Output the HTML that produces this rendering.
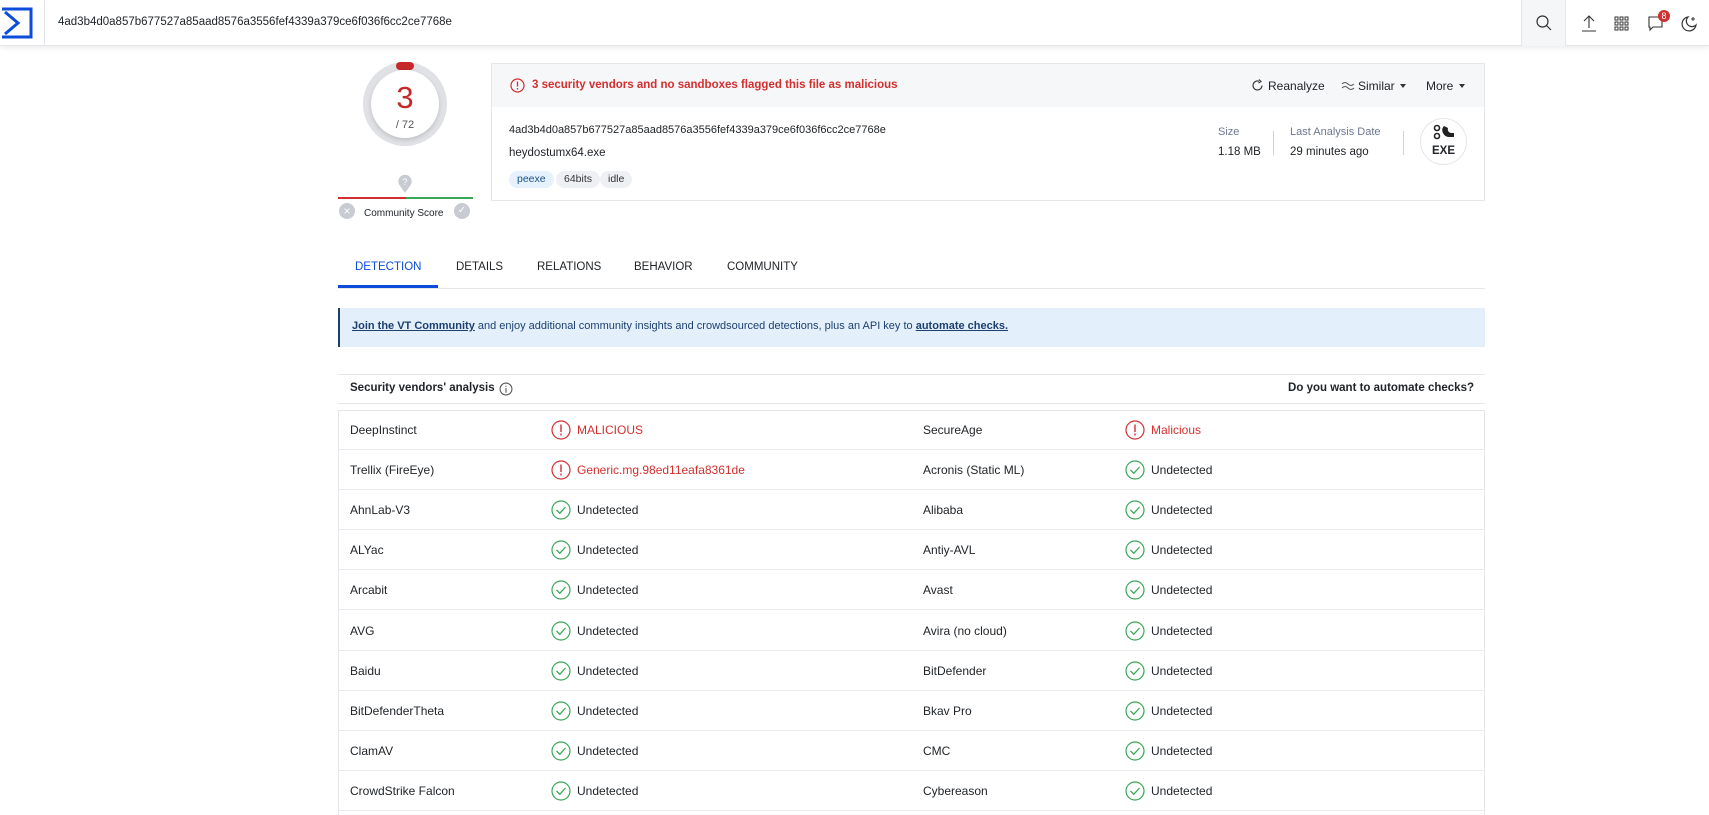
<!DOCTYPE html>
<html><head><meta charset="utf-8"><style>
*{margin:0;padding:0;box-sizing:border-box}
body{width:1709px;height:815px;overflow:hidden;background:#fff;font-family:"Liberation Sans",sans-serif;color:#212529;font-size:12px;position:relative}
.a{position:absolute;white-space:nowrap}
.hdr{position:absolute;left:0;top:0;width:1709px;height:46px;border-bottom:1px solid #e4e6ea;box-shadow:0 2px 5px rgba(0,0,0,.08);background:#fff}
.tag{position:absolute;top:171px;height:17px;line-height:17px;border-radius:9px;background:#eef0f4;font-size:10.5px;padding:0 8px;color:#333}
.row{position:absolute;left:338px;width:1147px;height:40px;border-bottom:1px solid #e8eaee}
.row span{position:absolute;top:13px;font-size:12px}
.row svg{position:absolute;top:10px}
.lbl{color:#6b7791}
.car{position:absolute;width:0;height:0;border-left:3.5px solid transparent;border-right:3.5px solid transparent;border-top:4px solid #333}
</style></head><body>
<div class="hdr">
 <svg class="a" style="left:0;top:7px" width="33" height="32" viewBox="0 0 33 32"><path d="M2 2H31V30H2" fill="none" stroke="#0b4dda" stroke-width="3"/><path d="M5 5L18 16L5 27" fill="none" stroke="#0b4dda" stroke-width="3"/></svg>
 <div class="a" style="left:44px;top:0;width:1px;height:46px;background:#e4e6ea"></div>
 <div class="a" style="left:58px;top:16px;font-size:11.5px">4ad3b4d0a857b677527a85aad8576a3556fef4339a379ce6f036f6cc2ce7768e</div>
 <div class="a" style="left:1521px;top:0;width:45px;height:46px;background:#f5f6f8;border-left:1px solid #e4e6ea;border-right:1px solid #e4e6ea"></div>
 <svg class="a" style="left:1535px;top:14px" width="18" height="18" viewBox="0 0 18 18"><circle cx="7.5" cy="7.5" r="5.5" fill="none" stroke="#333" stroke-width="1.2"/><path d="M11.5 11.5L16 16" stroke="#333" stroke-width="1.2"/></svg>
 <svg class="a" style="left:1581px;top:14px" width="16" height="18" viewBox="0 0 16 18"><path d="M8 14V2M3 7L8 2L13 7M1 17H15" fill="none" stroke="#333" stroke-width="1.1"/></svg>
 <svg class="a" style="left:1614px;top:16px" width="15" height="15" viewBox="0 0 15 15" fill="none" stroke="#333" stroke-width="1"><rect x="1" y="1" width="3" height="3"/><rect x="6" y="1" width="3" height="3"/><rect x="11" y="1" width="3" height="3"/><rect x="1" y="6" width="3" height="3"/><rect x="6" y="6" width="3" height="3"/><rect x="11" y="6" width="3" height="3"/><rect x="1" y="11" width="3" height="3"/><rect x="6" y="11" width="3" height="3"/><rect x="11" y="11" width="3" height="3"/></svg>
 <svg class="a" style="left:1647px;top:15px" width="18" height="18" viewBox="0 0 18 18"><path d="M2 2H15V12H6L3 15V12H2Z" fill="none" stroke="#333" stroke-width="1.1"/></svg>
 <div class="a" style="left:1658px;top:10px;width:12px;height:12px;border-radius:50%;background:#d32f2f;color:#fff;font-size:9px;text-align:center;line-height:12px">8</div>
 <svg class="a" style="left:1680px;top:15px" width="18" height="18" viewBox="0 0 18 18"><path d="M8 2A7 7 0 1 0 16 10A5.5 5.5 0 0 1 8 2Z" fill="none" stroke="#333" stroke-width="1.2"/><path d="M13 2V6M11 4H15" stroke="#333" stroke-width="1"/></svg>
</div>

<!-- score -->
<div class="a" style="left:363px;top:62px;width:84px;height:84px;border-radius:50%;background:#e0e1e5"></div>
<div class="a" style="left:396px;top:62px;width:18px;height:8px;border-radius:4px;background:#c62828"></div>
<div class="a" style="left:371px;top:70px;width:68px;height:68px;border-radius:50%;background:#fff;box-shadow:0 2px 4px rgba(0,0,0,.15)"></div>
<div class="a" style="left:371px;width:68px;text-align:center;top:80px;font-size:31px;color:#c62828">3</div>
<div class="a" style="left:371px;width:68px;text-align:center;top:119px;font-size:11px;color:#555">/ 72</div>
<svg class="a" style="left:397px;top:174px" width="16" height="20" viewBox="0 0 14 18"><path d="M7 17L2 10A6 6 0 1 1 12 10Z" fill="#c8cbd2"/><text x="7" y="10" font-size="8" fill="#fff" text-anchor="middle" font-family="Liberation Sans">?</text></svg>
<div class="a" style="left:338px;top:197px;width:68px;height:2px;background:#d32f2f"></div>
<div class="a" style="left:406px;top:197px;width:67px;height:2px;background:#3aa757"></div>
<div class="a" style="left:339px;top:203px;width:16px;height:16px;border-radius:50%;background:#c8cbd2;color:#fff;font-size:12px;text-align:center;line-height:16px">×</div>
<div class="a" style="left:454px;top:203px;width:16px;height:16px;border-radius:50%;background:#c8cbd2;color:#fff;font-size:10px;text-align:center;line-height:16px">✓</div>
<div class="a" style="left:364px;top:208px;font-size:10px">Community Score</div>

<!-- card -->
<div class="a" style="left:491px;top:63px;width:994px;height:138px;border:1px solid #e4e6ea"></div>
<div class="a" style="left:492px;top:64px;width:992px;height:43px;background:#f6f7f9"></div>
<svg class="a" style="left:510px;top:78px" width="15" height="15" viewBox="0 0 15 15"><circle cx="7.5" cy="7.5" r="6.5" fill="none" stroke="#d32f2f" stroke-width="1.2"/><path d="M7.5 3.5V8.5M7.5 10V11.5" stroke="#d32f2f" stroke-width="1.3"/></svg>
<div class="a" style="left:532px;top:79px;font-weight:bold;color:#d32f2f;font-size:11.5px">3 security vendors and no sandboxes flagged this file as malicious</div>
<svg class="a" style="left:1251px;top:79px" width="13" height="13" viewBox="0 0 13 13"><path d="M11 6.5A4.5 4.5 0 1 1 8 2.2" fill="none" stroke="#333" stroke-width="1.1"/><path d="M8 0.5L10 2.5L7.5 4" fill="none" stroke="#333" stroke-width="1.1"/></svg>
<div class="a" style="left:1268px;top:79px;font-size:12px">Reanalyze</div>
<svg class="a" style="left:1341px;top:81px" width="14" height="10" viewBox="0 0 14 10"><path d="M1 3Q4 0 7 3T13 3M1 7Q4 4 7 7T13 7" fill="none" stroke="#555" stroke-width="1"/></svg>
<div class="a" style="left:1358px;top:79px;font-size:12px">Similar</div>
<div class="car" style="left:1400px;top:84px"></div>
<div class="a" style="left:1426px;top:79px;font-size:12px">More</div>
<div class="car" style="left:1459px;top:84px"></div>
<div class="a" style="left:509px;top:124px;font-size:11px">4ad3b4d0a857b677527a85aad8576a3556fef4339a379ce6f036f6cc2ce7768e</div>
<div class="a" style="left:509px;top:147px;font-size:11.5px">heydostumx64.exe</div>
<div class="tag" style="left:509px;background:#e5f1fc;color:#1c4f8a">peexe</div>
<div class="tag" style="left:556px">64bits</div>
<div class="tag" style="left:600px">idle</div>
<div class="a lbl" style="left:1218px;top:126px;font-size:11px">Size</div>
<div class="a" style="left:1218px;top:146px;font-size:11.5px">1.18 MB</div>
<div class="a" style="left:1273px;top:131px;width:1px;height:24px;background:#d0d3d9"></div>
<div class="a lbl" style="left:1290px;top:126px;font-size:11px">Last Analysis Date</div>
<div class="a" style="left:1290px;top:146px;font-size:11.5px">29 minutes ago</div>
<div class="a" style="left:1403px;top:131px;width:1px;height:24px;background:#d0d3d9"></div>
<div class="a" style="left:1420px;top:118px;width:47px;height:47px;border-radius:50%;border:1px solid #e4e6ea"></div>
<svg class="a" style="left:1432px;top:124px" width="24" height="20" viewBox="0 0 24 20"><circle cx="5" cy="4" r="2.5" fill="none" stroke="#222" stroke-width="1.6"/><circle cx="5" cy="12" r="2.5" fill="none" stroke="#222" stroke-width="1.6"/><path d="M12 2Q9 5 11 9Q13 13 17 13L22 13V9L19 9Q15 8 16 4Z" fill="#222"/></svg>
<div class="a" style="left:1420px;width:47px;text-align:center;top:145px;font-size:11.5px;font-weight:bold">EXE</div>

<!-- tabs -->
<div class="a" style="left:355px;top:261px;font-size:11.5px;color:#0b4dda">DETECTION</div>
<div class="a" style="left:456px;top:261px;font-size:11.5px">DETAILS</div>
<div class="a" style="left:537px;top:261px;font-size:11.5px">RELATIONS</div>
<div class="a" style="left:634px;top:261px;font-size:11.5px">BEHAVIOR</div>
<div class="a" style="left:727px;top:261px;font-size:11.5px">COMMUNITY</div>
<div class="a" style="left:338px;top:288px;width:1147px;height:1px;background:#e4e6ea"></div>
<div class="a" style="left:338px;top:285px;width:100px;height:3px;background:#0b4dda"></div>

<!-- banner -->
<div class="a" style="left:338px;top:308px;width:1147px;height:39px;background:#e3f0fc;border-left:2px solid #1c3f6e"></div>
<div class="a" style="left:352px;top:320px;font-size:11px;color:#1c3f6e"><b style="text-decoration:underline">Join the VT Community</b> and enjoy additional community insights and crowdsourced detections, plus an API key to <b style="text-decoration:underline">automate checks.</b></div>

<!-- section -->
<div class="a" style="left:338px;top:374px;width:1147px;height:1px;background:#e4e6ea"></div>
<div class="a" style="left:338px;top:403px;width:1147px;height:1px;background:#e4e6ea"></div>
<div class="a" style="left:350px;top:382px;font-size:11.5px;font-weight:bold">Security vendors' analysis</div>
<svg class="a" style="left:499px;top:382px" width="14" height="14" viewBox="0 0 13 13"><circle cx="6.5" cy="6.5" r="5.5" fill="none" stroke="#555"/><path d="M6.5 5.5V10M6.5 3.5V4.5" stroke="#555"/></svg>
<div class="a" style="left:1200px;width:274px;text-align:right;top:382px;font-size:11.5px;font-weight:bold">Do you want to automate checks?</div>

<div class="a" style="left:338px;top:410px;width:1147px;height:405px;border:1px solid #e4e6ea;border-bottom:none"></div>
<div id="rows"></div>
<script>
var M='<svg width="20" height="20" viewBox="0 0 20 20" style="left:LLpx"><circle cx="10" cy="10" r="9" fill="none" stroke="#d32f2f" stroke-width="1.2"/><path d="M10 4.5V12M10 13.5V15.5" stroke="#d32f2f" stroke-width="1.4"/></svg>';
var U='<svg width="20" height="20" viewBox="0 0 20 20" style="left:LLpx"><circle cx="10" cy="10" r="9" fill="none" stroke="#3aa757" stroke-width="1.2"/><path d="M5.5 10L8.8 13.3L14.5 7" fill="none" stroke="#3aa757" stroke-width="1.3"/></svg>';
var d=[["DeepInstinct","m","MALICIOUS","SecureAge","m","Malicious"],["Trellix (FireEye)","m","Generic.mg.98ed11eafa8361de","Acronis (Static ML)","u"],["AhnLab-V3","u",0,"Alibaba","u"],["ALYac","u",0,"Antiy-AVL","u"],["Arcabit","u",0,"Avast","u"],["AVG","u",0,"Avira (no cloud)","u"],["Baidu","u",0,"BitDefender","u"],["BitDefenderTheta","u",0,"Bkav Pro","u"],["ClamAV","u",0,"CMC","u"],["CrowdStrike Falcon","u",0,"Cybereason","u"]];
var h='';
function res(k,txt,x){
 var ic=(k=="m"?M:U).replace('LL',x);
 return ic+'<span style="left:'+(x+26)+'px;color:'+(k=="m"?'#d32f2f':'#212529')+'">'+(txt||'Undetected')+'</span>';
}
d.forEach(function(r,i){
 var t=410+i*40.1;
 h+='<div class="row" style="top:'+t+'px"><span style="left:12px">'+r[0]+'</span>'+res(r[1],r[2],213)+'<span style="left:585px">'+r[3]+'</span>'+res(r[4],r[5],787)+'</div>';
});
document.getElementById('rows').innerHTML=h;
</script>
</body></html>
